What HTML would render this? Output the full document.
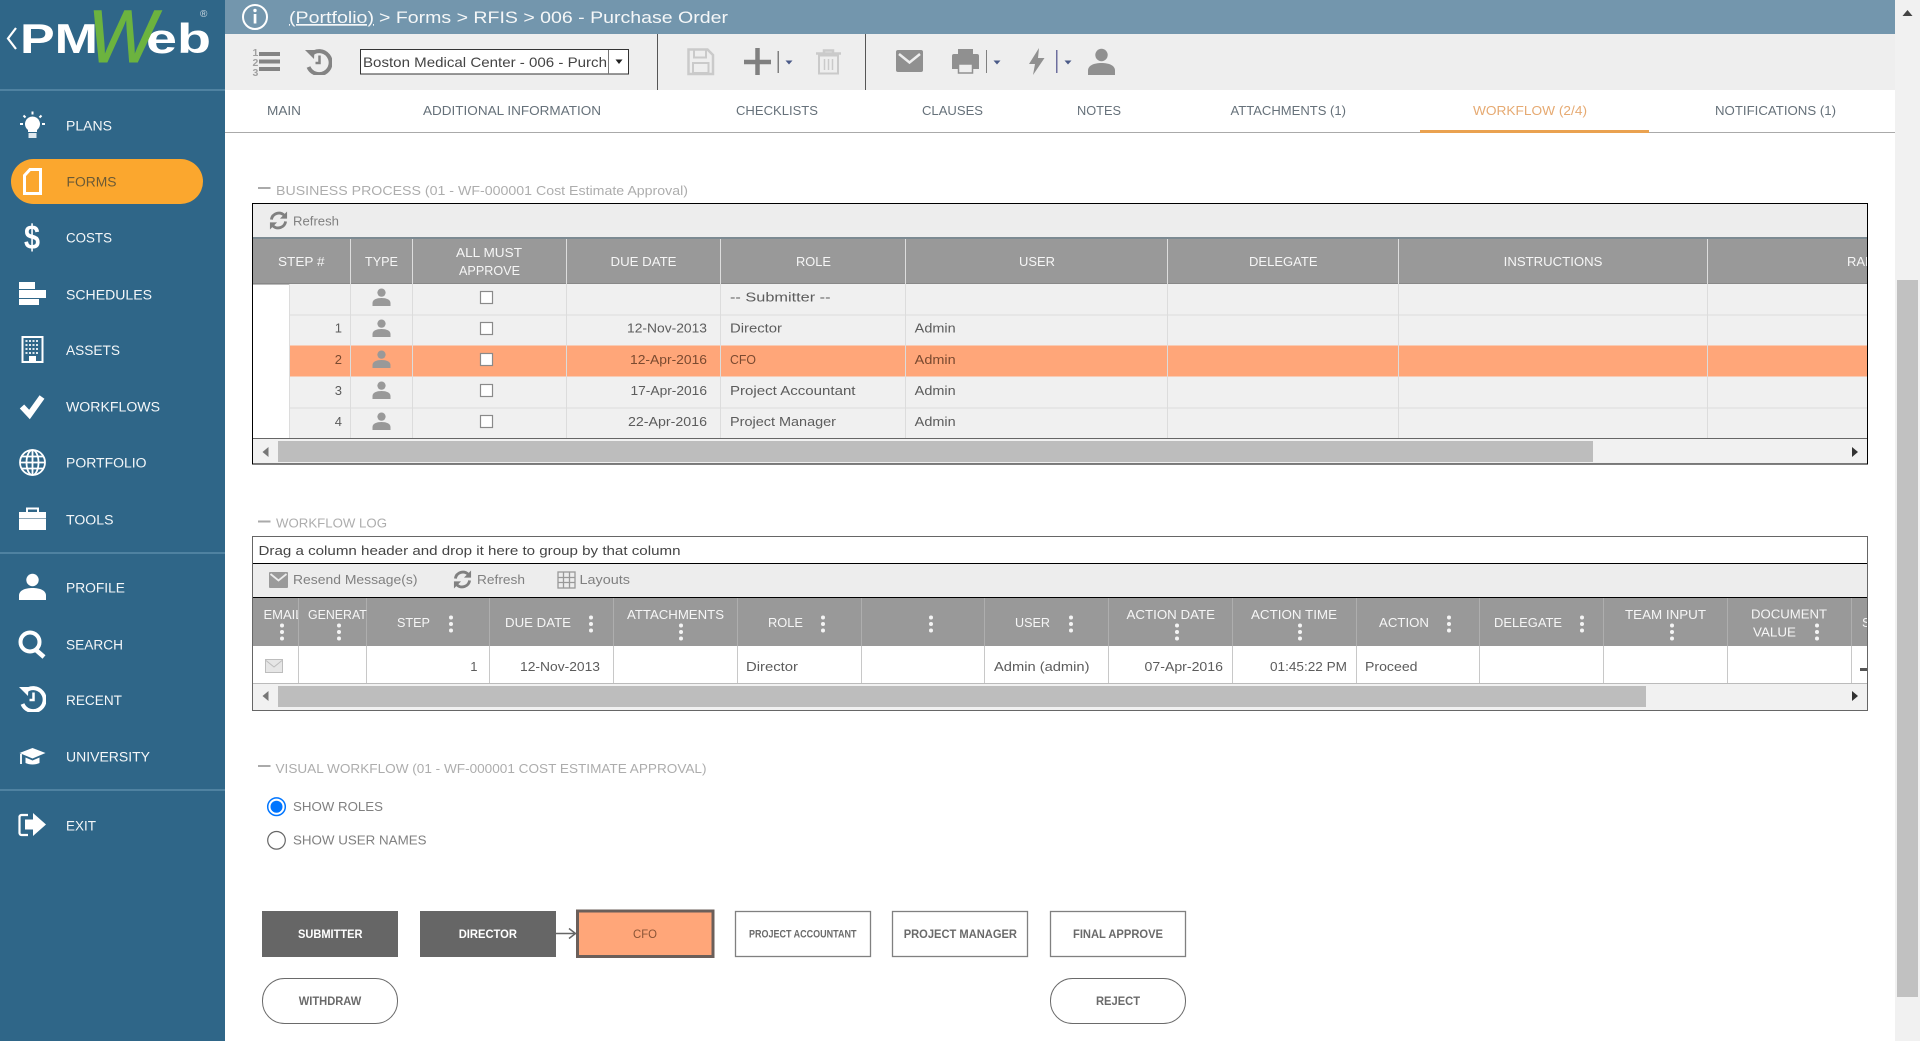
<!DOCTYPE html>
<html lang="en"><head><meta charset="utf-8"><title>PMWeb - Purchase Order Workflow</title>
<style>
html,body{margin:0;padding:0;background:#fff;width:1920px;height:1041px;overflow:hidden}
svg{display:block;font-family:"Liberation Sans",sans-serif}
.n{font-size:13.5px;fill:#f4f7f9}
.tb{font-size:12.5px;fill:#66717a}
.h{font-size:13px;fill:#adadad;transform:translateY(-.8px)}
.th{font-size:13px;fill:#f6f6f6;transform:translateY(-.6px)}
.c{font-size:13px;fill:#5c5c5c;transform:translateY(-.6px)}
.o{font-size:13px;fill:#7a4a30;transform:translateY(-.6px)}
.bar{font-size:13px;fill:#808080;transform:translateY(-.6px)}
.b{font-size:12px;font-weight:bold;fill:#fff}
.g{font-size:12px;font-weight:bold;fill:#6a6a6a}
</style></head><body>
<svg width="1920" height="1041" viewBox="0 0 1920 1041" xmlns="http://www.w3.org/2000/svg">
<defs>
<symbol id="p" viewBox="0 0 27 27"><circle cx="13.5" cy="7" r="6.2"/><path d="M0 27v-4.500c0-5 6-7.500 13.500-7.500S27 17.500 27 22.500V27z"/></symbol>
<symbol id="hs" viewBox="0 0 27 27"><path d="M6 6.500A11.500 11.500 0 1 1 3.500 19" fill="none" stroke="currentColor" stroke-width="4"/><path d="M0 2h9.500L9 11z" fill="currentColor"/><path d="M14.500 7.500v7.500h-4" fill="none" stroke="currentColor" stroke-width="2.500"/></symbol>
<symbol id="r" viewBox="0 0 20 20"><path d="M2.500 9A8 8 0 0 1 16 4.500" fill="none" stroke="currentColor" stroke-width="3"/><path d="M19 0.500V8h-7.500z" fill="currentColor"/><path d="M17.500 11A8 8 0 0 1 4 15.500" fill="none" stroke="currentColor" stroke-width="3"/><path d="M1 19.500V12h7.500z" fill="currentColor"/></symbol>
<g id="d" fill="#f4f4f4"><circle cx="0" cy="-6.500" r="2"/><circle cx="0" cy="0" r="2"/><circle cx="0" cy="6.500" r="2"/></g>
<clipPath id="c1"><rect x="253" y="238" width="1614" height="46"/></clipPath>
<clipPath id="c2"><rect x="253" y="598" width="45" height="48"/></clipPath>
<clipPath id="c3"><rect x="299" y="598" width="68" height="48"/></clipPath>
<clipPath id="c4"><rect x="253" y="598" width="1614" height="90"/></clipPath>
</defs>

<!-- sidebar -->
<rect width="225" height="1041" fill="#2f6688"/>
<rect y="89.500" width="225" height="1" fill="#6f9dba"/>
<rect y="552.500" width="225" height="1" fill="#6f9dba"/>
<rect y="789.500" width="225" height="1" fill="#6f9dba"/>

<!-- logo -->
<path d="M16 28L8 38.500l8 10.500" fill="none" stroke="#fff" stroke-width="2.200"/>
<text x="20" y="53" font-size="42" font-weight="bold" fill="#fff" textLength="78" lengthAdjust="spacingAndGlyphs">PM</text>
<text x="146" y="53" font-size="42" font-weight="bold" fill="#fff" textLength="65" lengthAdjust="spacingAndGlyphs">eb</text>
<text x="88" y="62" font-size="74" font-style="italic" fill="#6cb33f" stroke="#6cb33f" stroke-width="1" textLength="68" lengthAdjust="spacingAndGlyphs">W</text>
<text x="200" y="17" font-size="10" fill="#cfdbe4">®</text>

<!-- nav -->
<path d="M32.500 116.500a7.500 7.500 0 0 1 4.500 13.500v2h-9v-2a7.500 7.500 0 0 1 4.500-13.500z" fill="#fff"/><rect x="28.500" y="133" width="8" height="5" fill="#dfe8ee"/>
<path d="M32.500 111.500v3M23.500 115.500l2 2M41.500 115.500l-2 2M20 124h3M42 124h3" stroke="#fff" stroke-width="2" fill="none"/>
<text class="n" x="66" y="130.500" textLength="46" lengthAdjust="spacingAndGlyphs">PLANS</text>

<rect x="11" y="159" width="192" height="45" rx="22.500" fill="#fba72e"/>
<path d="M30 169.500h10.500v24h-16v-18z" fill="#fba72e" stroke="#fff" stroke-width="3"/>
<text x="66.500" y="186.500" font-size="13.500" fill="#6b5a35" textLength="50" lengthAdjust="spacingAndGlyphs">FORMS</text>

<text x="24" y="249" font-size="34" font-weight="bold" fill="#fff" textLength="16" lengthAdjust="spacingAndGlyphs">$</text>
<text class="n" x="66" y="242.500" textLength="46" lengthAdjust="spacingAndGlyphs">COSTS</text>

<rect x="19" y="282" width="16" height="7" fill="#fff"/><rect x="19" y="290" width="27" height="8" fill="#fff"/><rect x="19" y="299" width="20" height="6" fill="#fff"/>
<text class="n" x="66" y="299.500" textLength="86" lengthAdjust="spacingAndGlyphs">SCHEDULES</text>

<rect x="22.500" y="337" width="20" height="25" fill="none" stroke="#fff" stroke-width="2"/>
<path d="M25.500 341h14M25.500 345h14M25.500 349h14M25.500 353h14" stroke="#dfe8ee" stroke-width="2" stroke-dasharray="2 1.500"/><rect x="29" y="356" width="7" height="6" fill="#fff"/>
<text class="n" x="66" y="355" textLength="54" lengthAdjust="spacingAndGlyphs">ASSETS</text>

<path d="M22 406.500l7.500 8L42 397" fill="none" stroke="#fff" stroke-width="6"/>
<text class="n" x="66" y="411.700" textLength="94" lengthAdjust="spacingAndGlyphs">WORKFLOWS</text>

<g fill="none" stroke="#fff" stroke-width="1.800"><circle cx="32.500" cy="462.500" r="12.500"/><ellipse cx="32.500" cy="462.500" rx="6" ry="12.500"/><path d="M32.500 450v25M21.500 456.500h22M20 462.500h25M21.500 468.500h22"/></g>
<text class="n" x="66" y="467.300" textLength="80.500" lengthAdjust="spacingAndGlyphs">PORTFOLIO</text>

<path d="M27 512.500v-4h11v4" fill="none" stroke="#fff" stroke-width="2"/><rect x="19" y="512" width="27" height="18" fill="#fff"/><rect x="19" y="518" width="27" height="1" fill="#8fa8b8"/>
<text class="n" x="66" y="524.700" textLength="47.500" lengthAdjust="spacingAndGlyphs">TOOLS</text>

<use href="#p" x="19" y="573" width="27" height="27" fill="#fff"/>
<text class="n" x="66" y="592.300" textLength="59" lengthAdjust="spacingAndGlyphs">PROFILE</text>

<circle cx="30" cy="642" r="9.500" fill="none" stroke="#fff" stroke-width="4"/><path d="M36 650l8 7" stroke="#fff" stroke-width="4.500" fill="none"/>
<text class="n" x="66" y="649.700" textLength="57" lengthAdjust="spacingAndGlyphs">SEARCH</text>

<use href="#hs" x="19" y="685" width="27" height="27" style="color:#fff"/>
<text class="n" x="66" y="705" textLength="56" lengthAdjust="spacingAndGlyphs">RECENT</text>

<path d="M19.500 753l13-5 13 5-13 5.500z" fill="#fff"/><path d="M25.500 757.500v5.500c4 2 10 2 14 0v-5.500l-7 3z" fill="#fff"/><path d="M21 754v10" stroke="#fff" stroke-width="1.800"/>
<text class="n" x="66" y="761.700" textLength="84" lengthAdjust="spacingAndGlyphs">UNIVERSITY</text>

<path d="M28 815h-6.500a2 2 0 0 0-2 2v16a2 2 0 0 0 2 2H28" fill="none" stroke="#fff" stroke-width="2.200"/><path d="M25 819.500h8v-6.500l13 11.500-13 11.500v-6.500h-8z" fill="#fff"/>
<text class="n" x="66" y="830.700" textLength="30" lengthAdjust="spacingAndGlyphs">EXIT</text>

<!-- top bar -->
<rect x="225" width="1670" height="34" fill="#7396ad"/>
<circle cx="255" cy="17" r="12" fill="none" stroke="#fff" stroke-width="2"/><circle cx="255" cy="10.500" r="1.700" fill="#fff"/><rect x="253.700" y="14" width="2.700" height="9.500" fill="#fff"/>
<text x="289" y="23" font-size="17" fill="#f5f7f8" text-decoration="underline" textLength="85" lengthAdjust="spacingAndGlyphs">(Portfolio)</text>
<text x="379" y="23" font-size="17" fill="#f5f7f8" textLength="349" lengthAdjust="spacingAndGlyphs">&gt; Forms &gt; RFIS &gt; 006 - Purchase Order</text>

<!-- toolbar -->
<rect x="225" y="34" width="1670" height="56" fill="#eee"/>
<g fill="#848484"><rect x="259" y="52" width="21" height="4"/><rect x="259" y="59.500" width="21" height="4"/><rect x="259" y="67" width="21" height="4"/></g>
<g font-size="10.500" font-weight="bold" fill="#a0a0a0"><text x="252.500" y="56">1</text><text x="252.500" y="66">2</text><text x="252.500" y="76">3</text></g>
<use href="#hs" x="305" y="48" width="27" height="27" style="color:#848484"/>
<rect x="360.500" y="49.500" width="268" height="24.500" fill="#fff" stroke="#333"/>
<rect x="608" y="50" width="1" height="24" fill="#777"/>
<path d="M615.500 59.500h7l-3.500 4.500z" fill="#222"/>
<text x="363" y="67" font-size="14" fill="#444" textLength="244" lengthAdjust="spacingAndGlyphs">Boston Medical Center - 006 - Purch</text>
<rect x="657" y="34" width="1" height="56" fill="#555"/>
<rect x="865" y="34" width="1" height="56" fill="#555"/>

<path d="M688.500 49.500h19l5.500 5.500v19h-24.500z" fill="none" stroke="#cacaca" stroke-width="2.500"/><rect x="694" y="49.500" width="12" height="8" fill="none" stroke="#cacaca" stroke-width="2"/><rect x="693" y="63" width="15.500" height="10" fill="none" stroke="#cacaca" stroke-width="2"/>
<path d="M744 62h27M757.500 48v27" stroke="#808080" stroke-width="4.500" fill="none"/>
<rect x="777.500" y="51" width="1.500" height="22" fill="#808080"/><path d="M785.500 60.500h7l-3.500 4z" fill="#4a5a88"/>
<path d="M816 53.500h25M824 53.500v-3h9v3" fill="none" stroke="#cacaca" stroke-width="2.500"/><path d="M819 55.500h19v18h-19z" fill="none" stroke="#cacaca" stroke-width="2"/><path d="M824.500 59v11M828.500 59v11M832.500 59v11" stroke="#cacaca" stroke-width="1.500"/>

<rect x="896" y="50" width="27" height="22" rx="2" fill="#909090"/><path d="M899 54l10.500 8.500L920 54" fill="none" stroke="#eee" stroke-width="2.500"/>
<rect x="958" y="49" width="15" height="5" fill="#909090"/><path d="M954 54h23a2 2 0 0 1 2 2v13h-27V56a2 2 0 0 1 2-2z" fill="#909090"/><rect x="958.500" y="64" width="14" height="9" fill="#eee" stroke="#909090" stroke-width="1.500"/>
<rect x="986" y="50" width="1" height="23" fill="#808080"/><path d="M993.500 60.500h7l-3.500 4z" fill="#4a5a88"/>
<path d="M1039 48l-10 16h6l-2 11 11.500-17h-6.500z" fill="#909090"/>
<rect x="1056" y="50" width="1.500" height="23" fill="#6d6f9e"/><path d="M1064.500 60.500h7l-3.500 4z" fill="#4a5a88"/>
<use href="#p" x="1088" y="48" width="27" height="27" fill="#909090"/>

<!-- tabs -->
<rect x="225" y="132" width="1670" height="1" fill="#aaa"/>
<rect x="1420" y="130" width="229" height="3" fill="#eaa250"/>
<text class="tb" x="267" y="115" textLength="34" lengthAdjust="spacingAndGlyphs">MAIN</text>
<text class="tb" x="423" y="115" textLength="178" lengthAdjust="spacingAndGlyphs">ADDITIONAL INFORMATION</text>
<text class="tb" x="736" y="115" textLength="82" lengthAdjust="spacingAndGlyphs">CHECKLISTS</text>
<text class="tb" x="922" y="115" textLength="61" lengthAdjust="spacingAndGlyphs">CLAUSES</text>
<text class="tb" x="1077" y="115" textLength="44" lengthAdjust="spacingAndGlyphs">NOTES</text>
<text class="tb" x="1230.500" y="115" textLength="115.500" lengthAdjust="spacingAndGlyphs">ATTACHMENTS (1)</text>
<text x="1473" y="115" font-size="12.500" fill="#e6aa72" textLength="114" lengthAdjust="spacingAndGlyphs">WORKFLOW (2/4)</text>
<text class="tb" x="1715" y="115" textLength="121" lengthAdjust="spacingAndGlyphs">NOTIFICATIONS (1)</text>

<!-- section 1 -->
<rect x="258" y="187" width="12.500" height="2" fill="#aaa"/>
<text class="h" x="276" y="196" textLength="412" lengthAdjust="spacingAndGlyphs">BUSINESS PROCESS (01 - WF-000001 Cost Estimate Approval)</text>
<rect x="252.500" y="203.500" width="1615" height="260.500" fill="#fff" stroke="#000"/>
<rect x="253" y="204" width="1614" height="33" fill="#ededed"/>
<use href="#r" x="269" y="211" width="19" height="19" style="color:#808080"/>
<text x="293" y="225.300" font-size="12.500" fill="#808080" textLength="46" lengthAdjust="spacingAndGlyphs">Refresh</text>
<rect x="253" y="237" width="1614" height="2" fill="#7c8a92"/>
<rect x="253" y="239" width="1614" height="45" fill="#999"/>
<rect x="253" y="283.500" width="1614" height="1" fill="#777"/>
<g fill="#ddd"><rect x="350" y="239" width="1" height="45"/><rect x="412" y="239" width="1" height="45"/><rect x="566" y="239" width="1" height="45"/><rect x="720" y="239" width="1" height="45"/><rect x="905" y="239" width="1" height="45"/><rect x="1167" y="239" width="1" height="45"/><rect x="1398" y="239" width="1" height="45"/><rect x="1707" y="239" width="1" height="45"/></g>
<text class="th" x="278" y="266.400" textLength="46.500" lengthAdjust="spacingAndGlyphs">STEP #</text>
<text class="th" x="365" y="266.400" textLength="33" lengthAdjust="spacingAndGlyphs">TYPE</text>
<text class="th" x="456" y="257.400" textLength="66" lengthAdjust="spacingAndGlyphs">ALL MUST</text>
<text class="th" x="459" y="275.400" textLength="61" lengthAdjust="spacingAndGlyphs">APPROVE</text>
<text class="th" x="610.500" y="266.400" textLength="66" lengthAdjust="spacingAndGlyphs">DUE DATE</text>
<text class="th" x="796" y="266.400" textLength="35" lengthAdjust="spacingAndGlyphs">ROLE</text>
<text class="th" x="1019" y="266.400" textLength="36" lengthAdjust="spacingAndGlyphs">USER</text>
<text class="th" x="1249" y="266.400" textLength="68.500" lengthAdjust="spacingAndGlyphs">DELEGATE</text>
<text class="th" x="1503.700" y="266.400" textLength="98.700" lengthAdjust="spacingAndGlyphs">INSTRUCTIONS</text>
<text class="th" x="1847" y="266.400" clip-path="url(#c1)">RANK</text>

<rect x="289" y="284" width="1578" height="154" fill="#f0f0f0"/>
<rect x="289" y="345.500" width="1578" height="31" fill="#ffa679"/>
<g fill="#dcdcdc"><rect x="289" y="314.500" width="1578" height="1"/><rect x="289" y="407.500" width="1578" height="1"/>
<rect x="289" y="284" width="1" height="154"/><rect x="350" y="284" width="1" height="154"/><rect x="412" y="284" width="1" height="154"/><rect x="566" y="284" width="1" height="154"/><rect x="720" y="284" width="1" height="154"/><rect x="905" y="284" width="1" height="154"/><rect x="1167" y="284" width="1" height="154"/><rect x="1398" y="284" width="1" height="154"/><rect x="1707" y="284" width="1" height="154"/></g>
<g fill="#999">
<use href="#p" x="372.500" y="288" width="18" height="18"/><use href="#p" x="372.500" y="319" width="18" height="18"/><use href="#p" x="372.500" y="350" width="18" height="18"/><use href="#p" x="372.500" y="381" width="18" height="18"/><use href="#p" x="372.500" y="412" width="18" height="18"/></g>
<g fill="#fff" stroke="#8a8a8a" stroke-width="1.200"><rect x="480.500" y="291.500" width="12" height="12"/><rect x="480.500" y="322.500" width="12" height="12"/><rect x="480.500" y="353.500" width="12" height="12"/><rect x="480.500" y="384.500" width="12" height="12"/><rect x="480.500" y="415.500" width="12" height="12"/></g>
<text class="c" x="730" y="302" textLength="100.500" lengthAdjust="spacingAndGlyphs">-- Submitter --</text>
<text class="c" x="342" y="333" text-anchor="end">1</text>
<text class="c" x="627" y="333" textLength="80" lengthAdjust="spacingAndGlyphs">12-Nov-2013</text>
<text class="c" x="730" y="333" textLength="52" lengthAdjust="spacingAndGlyphs">Director</text>
<text class="c" x="914.700" y="333" textLength="41" lengthAdjust="spacingAndGlyphs">Admin</text>
<text class="o" x="342" y="364.400" text-anchor="end">2</text>
<text class="o" x="630" y="364.400" textLength="77" lengthAdjust="spacingAndGlyphs">12-Apr-2016</text>
<text class="o" x="730" y="364.400" textLength="26" lengthAdjust="spacingAndGlyphs">CFO</text>
<text class="o" x="914.700" y="364.400" textLength="41" lengthAdjust="spacingAndGlyphs">Admin</text>
<text class="c" x="342" y="395.400" text-anchor="end">3</text>
<text class="c" x="630.500" y="395.400" textLength="76.500" lengthAdjust="spacingAndGlyphs">17-Apr-2016</text>
<text class="c" x="730" y="395.400" textLength="125.500" lengthAdjust="spacingAndGlyphs">Project Accountant</text>
<text class="c" x="914.700" y="395.400" textLength="41" lengthAdjust="spacingAndGlyphs">Admin</text>
<text class="c" x="342" y="426.400" text-anchor="end">4</text>
<text class="c" x="628" y="426.400" textLength="79" lengthAdjust="spacingAndGlyphs">22-Apr-2016</text>
<text class="c" x="730" y="426.400" textLength="106" lengthAdjust="spacingAndGlyphs">Project Manager</text>
<text class="c" x="914.700" y="426.400" textLength="41" lengthAdjust="spacingAndGlyphs">Admin</text>

<rect x="253" y="438" width="1614" height="25.500" fill="#f1f1f1"/>
<rect x="253" y="438" width="1614" height="1" fill="#666"/>
<rect x="278" y="441" width="1315" height="21" fill="#bdbdbd"/>
<path d="M268.500 447v10l-6-5z" fill="#777"/><path d="M1852 447v10l6-5z" fill="#333"/>

<!-- section 2 -->
<rect x="258" y="520.500" width="12.500" height="2" fill="#aaa"/>
<text class="h" x="276" y="528.300" textLength="111" lengthAdjust="spacingAndGlyphs">WORKFLOW LOG</text>
<rect x="252.500" y="536.500" width="1615" height="174" fill="#fff" stroke="#666"/>
<rect x="253" y="563" width="1614" height="1" fill="#000"/>
<text x="258.500" y="555" font-size="13" fill="#444" textLength="422" lengthAdjust="spacingAndGlyphs">Drag a column header and drop it here to group by that column</text>
<rect x="253" y="564" width="1614" height="33" fill="#ededed"/>
<rect x="253" y="597" width="1614" height="1" fill="#000"/>
<rect x="269" y="572" width="19" height="16" rx="1" fill="#9a9a9a"/><path d="M270.500 574l8 6.500 8-6.500" fill="none" stroke="#ededed" stroke-width="1.800"/>
<text class="bar" x="293" y="584.500" textLength="124.500" lengthAdjust="spacingAndGlyphs">Resend Message(s)</text>
<use href="#r" x="453" y="570" width="19" height="19" style="color:#808080"/>
<text class="bar" x="477" y="584.500" textLength="48" lengthAdjust="spacingAndGlyphs">Refresh</text>
<g fill="none" stroke="#999" stroke-width="1.300"><rect x="558" y="572" width="17" height="16"/><path d="M563.500 572v16M569.500 572v16M558 577.500h17M558 582.500h17"/></g>
<text class="bar" x="579.500" y="584.500" textLength="50.500" lengthAdjust="spacingAndGlyphs">Layouts</text>

<rect x="253" y="598" width="1614" height="48" fill="#999"/>
<g fill="#aeaeae"><rect x="298" y="598" width="1" height="48"/><rect x="366" y="598" width="1" height="48"/><rect x="489" y="598" width="1" height="48"/><rect x="613" y="598" width="1" height="48"/><rect x="737" y="598" width="1" height="48"/><rect x="861" y="598" width="1" height="48"/><rect x="984" y="598" width="1" height="48"/><rect x="1108" y="598" width="1" height="48"/><rect x="1232" y="598" width="1" height="48"/><rect x="1356" y="598" width="1" height="48"/><rect x="1479" y="598" width="1" height="48"/><rect x="1603" y="598" width="1" height="48"/><rect x="1727" y="598" width="1" height="48"/><rect x="1851" y="598" width="1" height="48"/></g>
<text class="th" x="263.500" y="619.700" clip-path="url(#c2)">EMAIL</text>
<text class="th" x="308" y="619.700" clip-path="url(#c3)" textLength="76" lengthAdjust="spacingAndGlyphs">GENERATED</text>
<text class="th" x="397" y="627.400" textLength="33" lengthAdjust="spacingAndGlyphs">STEP</text>
<text class="th" x="505" y="627.400" textLength="66" lengthAdjust="spacingAndGlyphs">DUE DATE</text>
<text class="th" x="627" y="619.700" textLength="97" lengthAdjust="spacingAndGlyphs">ATTACHMENTS</text>
<text class="th" x="768" y="627.400" textLength="35" lengthAdjust="spacingAndGlyphs">ROLE</text>
<text class="th" x="1015" y="627.400" textLength="35" lengthAdjust="spacingAndGlyphs">USER</text>
<text class="th" x="1126.500" y="619.700" textLength="88.500" lengthAdjust="spacingAndGlyphs">ACTION DATE</text>
<text class="th" x="1251" y="619.700" textLength="86" lengthAdjust="spacingAndGlyphs">ACTION TIME</text>
<text class="th" x="1379" y="627.400" textLength="50" lengthAdjust="spacingAndGlyphs">ACTION</text>
<text class="th" x="1494" y="627.400" textLength="68" lengthAdjust="spacingAndGlyphs">DELEGATE</text>
<text class="th" x="1625" y="619.400" textLength="81" lengthAdjust="spacingAndGlyphs">TEAM INPUT</text>
<text class="th" x="1751" y="619" textLength="76" lengthAdjust="spacingAndGlyphs">DOCUMENT</text>
<text class="th" x="1753" y="637" textLength="43" lengthAdjust="spacingAndGlyphs">VALUE</text>
<text class="th" x="1862" y="627.400" clip-path="url(#c4)">S</text>
<use href="#d" x="282" y="632"/><use href="#d" x="339" y="632"/><use href="#d" x="451" y="624"/><use href="#d" x="591" y="624"/><use href="#d" x="681" y="632"/><use href="#d" x="823" y="624"/><use href="#d" x="931" y="624"/><use href="#d" x="1071" y="624"/><use href="#d" x="1177" y="632"/><use href="#d" x="1300" y="632"/><use href="#d" x="1449" y="624"/><use href="#d" x="1582" y="624"/><use href="#d" x="1672" y="632"/><use href="#d" x="1817" y="632"/>

<g fill="#c8c8c8"><rect x="298" y="646" width="1" height="37"/><rect x="366" y="646" width="1" height="37"/><rect x="489" y="646" width="1" height="37"/><rect x="613" y="646" width="1" height="37"/><rect x="737" y="646" width="1" height="37"/><rect x="861" y="646" width="1" height="37"/><rect x="984" y="646" width="1" height="37"/><rect x="1108" y="646" width="1" height="37"/><rect x="1232" y="646" width="1" height="37"/><rect x="1356" y="646" width="1" height="37"/><rect x="1479" y="646" width="1" height="37"/><rect x="1603" y="646" width="1" height="37"/><rect x="1727" y="646" width="1" height="37"/><rect x="1851" y="646" width="1" height="37"/></g>
<rect x="265.500" y="659.500" width="17" height="13" fill="#e6e6e6" stroke="#bdbdbd"/><path d="M266 660.500l8 6.500 8-6.500" fill="none" stroke="#bdbdbd"/>
<text class="c" x="477.500" y="671.700" text-anchor="end">1</text>
<text class="c" x="520" y="671.700" textLength="80" lengthAdjust="spacingAndGlyphs">12-Nov-2013</text>
<text class="c" x="746" y="671.700" textLength="52" lengthAdjust="spacingAndGlyphs">Director</text>
<text class="c" x="994" y="671.700" textLength="95.500" lengthAdjust="spacingAndGlyphs">Admin (admin)</text>
<text class="c" x="1144.500" y="671.700" textLength="78.500" lengthAdjust="spacingAndGlyphs">07-Apr-2016</text>
<text class="c" x="1270" y="671.700" textLength="77" lengthAdjust="spacingAndGlyphs">01:45:22 PM</text>
<text class="c" x="1365" y="671.700" textLength="52.500" lengthAdjust="spacingAndGlyphs">Proceed</text>
<rect x="1860" y="668" width="7" height="3" fill="#555"/>

<rect x="253" y="683.500" width="1614" height="26.500" fill="#f1f1f1"/>
<rect x="253" y="683" width="1614" height="1" fill="#bbb"/>
<rect x="278" y="686" width="1368" height="21" fill="#bdbdbd"/>
<path d="M268.500 691v10l-6-5z" fill="#777"/><path d="M1852 691v10l6-5z" fill="#333"/>

<!-- section 3 -->
<rect x="258" y="765" width="12.500" height="2" fill="#aaa"/>
<text class="h" x="275.500" y="774" textLength="431" lengthAdjust="spacingAndGlyphs">VISUAL WORKFLOW (01 - WF-000001 COST ESTIMATE APPROVAL)</text>
<circle cx="276.500" cy="806.700" r="8.800" fill="#fff" stroke="#0075ff" stroke-width="1.500"/><circle cx="276.500" cy="806.700" r="6" fill="#0075ff"/>
<circle cx="276.500" cy="840.300" r="8.800" fill="#fff" stroke="#666" stroke-width="1.200"/>
<text x="293" y="811" font-size="13" fill="#808080" textLength="90" lengthAdjust="spacingAndGlyphs">SHOW ROLES</text>
<text x="293" y="844.500" font-size="13" fill="#808080" textLength="133.500" lengthAdjust="spacingAndGlyphs">SHOW USER NAMES</text>

<rect x="262" y="911" width="136" height="46" fill="#666"/>
<rect x="420" y="911" width="136" height="46" fill="#666"/>
<path d="M556 933.500h19M569 928.500l6.500 5-6.500 5" fill="none" stroke="#666" stroke-width="1.500"/>
<rect x="577.500" y="911" width="135.500" height="45.500" fill="#ffa679" stroke="#6b5f5a" stroke-width="3"/>
<g fill="#fff" stroke="#808080" stroke-width="1.300"><rect x="735.500" y="911.500" width="135" height="45"/><rect x="892.500" y="911.500" width="135" height="45"/><rect x="1050.500" y="911.500" width="135" height="45"/></g>
<g fill="#fff" stroke="#6a6a6a" stroke-width="1"><rect x="262.500" y="978.500" width="135" height="45" rx="22"/><rect x="1050.500" y="978.500" width="135" height="45" rx="22"/></g>
<text class="b" x="298" y="938" textLength="64.500" lengthAdjust="spacingAndGlyphs">SUBMITTER</text>
<text class="b" x="458.700" y="938" textLength="58.300" lengthAdjust="spacingAndGlyphs">DIRECTOR</text>
<text x="633" y="938" font-size="12" fill="#8a5436" textLength="24" lengthAdjust="spacingAndGlyphs">CFO</text>
<text x="749" y="937.500" font-size="11" font-weight="bold" fill="#6a6a6a" textLength="107.500" lengthAdjust="spacingAndGlyphs">PROJECT ACCOUNTANT</text>
<text class="g" x="903.700" y="938" textLength="113.300" lengthAdjust="spacingAndGlyphs">PROJECT MANAGER</text>
<text class="g" x="1073" y="938" textLength="90" lengthAdjust="spacingAndGlyphs">FINAL APPROVE</text>
<text class="g" x="298.700" y="1005" textLength="62.600" lengthAdjust="spacingAndGlyphs">WITHDRAW</text>
<text class="g" x="1096" y="1005" textLength="44" lengthAdjust="spacingAndGlyphs">REJECT</text>

<!-- page scrollbar -->
<rect x="1895" width="25" height="1041" fill="#f1f1f1"/>
<path d="M1902.500 16h10l-5-6z" fill="#444"/>
<rect x="1897" y="280" width="21" height="717" fill="#c1c1c1"/>
</svg>
</body></html>
